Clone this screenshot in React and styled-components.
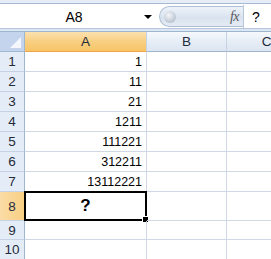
import React from 'react'
import styled, { createGlobalStyle } from 'styled-components'

const Global = createGlobalStyle`
  html, body { margin: 0; padding: 0; background: #ffffff; }
  body { font-family: 'Liberation Sans', Arial, sans-serif; overflow: hidden; }
`

const Sheet = styled.div`
  width: 271px;
  height: 259px;
  overflow: hidden;
  display: flex;
  flex-direction: column;
  background: #fff;
`

const TopStrip = styled.div`
  height: 3px;
  background: #e6edf7;
  border-bottom: 1px solid #a7bad3;
  flex: none;
`

const FormulaBar = styled.div`
  height: 23px;
  flex: none;
  display: flex;
  align-items: center;
  background: #fff;
  border-bottom: 1px solid #b6c6db;
  margin-top: 1px;
`

const NameBox = styled.div`
  width: 157px;
  height: 100%;
  display: flex;
  align-items: center;
  font-size: 14px;
  color: #000;
  span { flex: 1; text-align: center; padding-left: 4px; }
`

const Arrow = styled.div`
  width: 0;
  height: 0;
  border-left: 4px solid transparent;
  border-right: 4px solid transparent;
  border-top: 4px solid #000;
  margin-right: 5px;
`

const Pill = styled.div`
  width: 84px;
  height: 21px;
  margin-left: 2px;
  border-radius: 11px 0 0 11px;
  background: linear-gradient(#eef3f9, #d9e3ef 55%, #e4ebf4);
  border: 1px solid #aebfd5;
  border-right: none;
  box-sizing: border-box;
  display: flex;
  align-items: center;
`

const Knob = styled.div`
  width: 12px;
  height: 12px;
  border-radius: 50%;
  margin-left: 4px;
  background: radial-gradient(circle at 40% 35%, #f4f6f9, #c3ccd7 60%, #a3afbd);
`

const Fx = styled.span`
  margin-left: auto;
  margin-right: 4px;
  font-family: 'Liberation Serif', 'Times New Roman', serif;
  font-style: italic;
  font-size: 14px;
  color: #5a5a5a;
  letter-spacing: -0.5px;
`

const FormulaInput = styled.div`
  flex: 1;
  height: 100%;
  border-left: 1px solid #b6c6db;
  display: flex;
  align-items: center;
  padding-left: 8px;
  font-size: 14px;
`

const Band = styled.div`
  height: 2px;
  flex: none;
  background: #dce6f4;
`

const Grid = styled.div`
  display: grid;
  grid-template-columns: 25px 122px 80px 80px;
  grid-template-rows: 20px repeat(7, 20px) 29px 19px 20px;
  border-top: 1px solid #9eb6ce;
`

const Corner = styled.div`
  background: #c3d4ec;
  border-right: 1px solid #9eb6ce;
  border-bottom: 1px solid #9eb6ce;
  position: relative;
  &::after {
    content: '';
    position: absolute;
    right: 3px;
    bottom: 3px;
    width: 0;
    height: 0;
    border-left: 11px solid transparent;
    border-bottom: 11px solid #f4f7fc;
  }
`

const ColHead = styled.div`
  display: flex;
  align-items: center;
  justify-content: center;
  font-size: 13.5px;
  color: #1f2a3a;
  border-right: 1px solid #c5d2e3;
  border-bottom: 1px solid ${({ active }) => (active ? '#f2a24a' : '#9eb6ce')};
  background: ${({ active }) =>
    active
      ? 'linear-gradient(#fbe1b0, #f8cf82 50%, #f7c566)'
      : 'linear-gradient(#f6f9fc, #e6edf6 50%, #dce5f1)'};
`

const RowHead = styled.div`
  display: flex;
  align-items: center;
  justify-content: center;
  font-size: 13.5px;
  color: #1f2a3a;
  border-right: 1px solid ${({ active }) => (active ? '#f2a24a' : '#9eb6ce')};
  border-bottom: 1px solid #c5d2e3;
  background: ${({ active }) =>
    active ? 'linear-gradient(90deg, #fbdca6, #f8cf84)' : '#e4ecf7'};
`

const Cell = styled.div`
  display: flex;
  align-items: center;
  justify-content: ${({ center }) => (center ? 'center' : 'flex-end')};
  padding: 0 4px;
  font-size: 12.5px;
  color: #000;
  border-right: 1px solid #d0d7e5;
  border-bottom: 1px solid #d0d7e5;
  position: relative;
`

const Selection = styled.div`
  position: absolute;
  left: -1px;
  top: -1px;
  right: -1px;
  bottom: -1px;
  border: 2px solid #000;
  pointer-events: none;
  &::after {
    content: '';
    position: absolute;
    right: -4px;
    bottom: -4px;
    width: 5px;
    height: 5px;
    background: #000;
    border: 1px solid #fff;
  }
`

const Question = styled.span`
  font-size: 17px;
  font-weight: 700;
`

const values = ['1', '11', '21', '1211', '111221', '312211', '13112221']

export default function App() {
  const rows = [...values, null, '', '']
  return (
    <>
      <Global />
      <Sheet>
        <TopStrip />
        <FormulaBar>
          <NameBox>
            <span>A8</span>
            <Arrow />
          </NameBox>
          <Pill>
            <Knob />
            <Fx>fx</Fx>
          </Pill>
          <FormulaInput>?</FormulaInput>
        </FormulaBar>
        <Band />
        <Grid>
          <Corner />
          <ColHead active>A</ColHead>
          <ColHead>B</ColHead>
          <ColHead>C</ColHead>
          {rows.map((v, i) => (
            <React.Fragment key={i}>
              <RowHead active={i === 7}>{i + 1}</RowHead>
              {i === 7 ? (
                <Cell center>
                  <Question>?</Question>
                  <Selection />
                </Cell>
              ) : (
                <Cell>{v}</Cell>
              )}
              <Cell />
              <Cell />
            </React.Fragment>
          ))}
        </Grid>
      </Sheet>
    </>
  )
}
